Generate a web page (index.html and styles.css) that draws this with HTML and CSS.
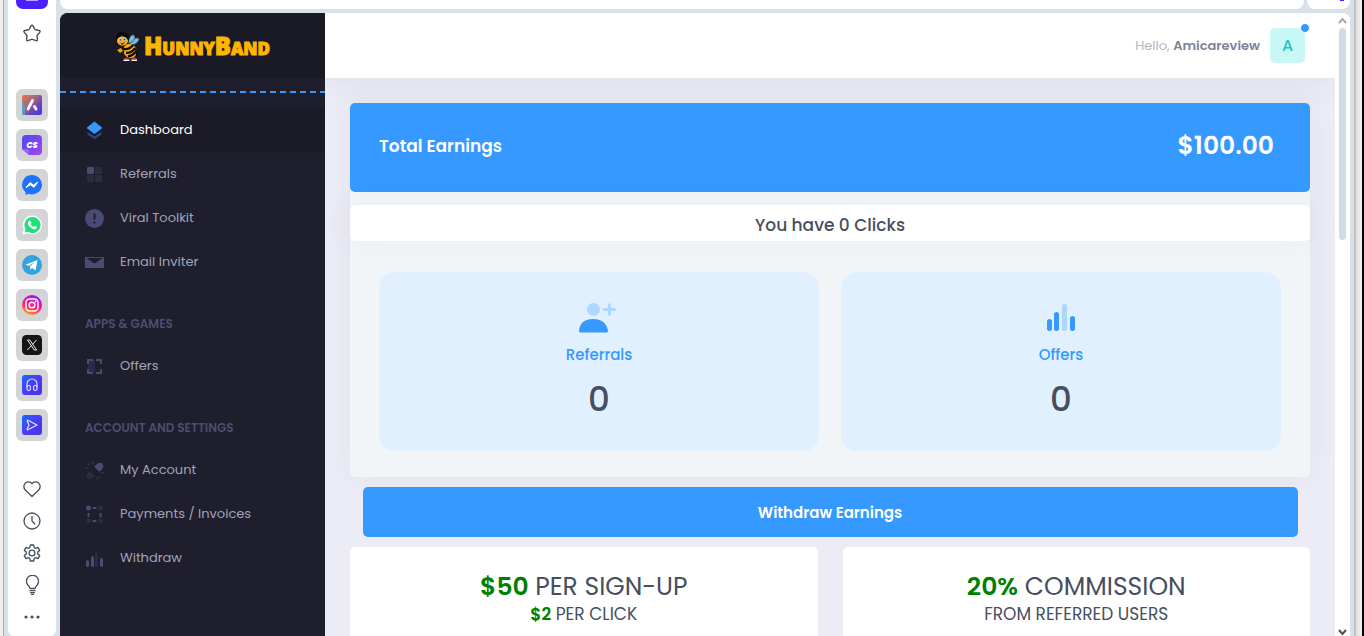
FILE: index.html
```html
<!DOCTYPE html>
<html lang="en">
<head>
  <meta charset="utf-8" />
  <meta name="viewport" content="width=device-width, initial-scale=1" />
  <title>HunnyBand</title>
  <link rel="stylesheet" href="styles.css">
</head>
<body>
<div class="edge-left"></div>
<div class="window">
  <aside class="rail">
    <button class="rail-home" aria-label="Home"><span></span></button>
    <button class="rail-star" aria-label="Bookmarks">
      <svg width="20" height="20" viewBox="0 0 20 20" fill="none" stroke="#46505a" stroke-width="1.4" stroke-linejoin="round"><path d="M9 2.900q1-1.500 2 0l1.800 3.200q.3.500.9.600l3.400.8q1.700.5.600 1.900l-2.400 2.800q-.3.400-.3.900l.4 3.400q0 1.700-1.500 1.200l-3.300-1.300q-.6-.3-1.200 0l-3.300 1.300q-1.500.5-1.500-1.200l.4-3.400q0-.5-.3-.9L2.300 9.400q-1.100-1.400.6-1.900l3.400-.8q.6-.1.9-.6z"/></svg>
    </button>
    <div class="apps">
      <button aria-label="Aria">
        <svg width="20" height="20" viewBox="0 0 20 20">
          <defs><linearGradient id="gAria" x1="0" y1="0" x2="1" y2="1"><stop offset="0" stop-color="#e8774a"/><stop offset=".4" stop-color="#a2687f"/><stop offset=".65" stop-color="#7045b4"/><stop offset="1" stop-color="#3d35f0"/></linearGradient></defs>
          <rect width="20" height="20" rx="2" fill="url(#gAria)"/>
          <path d="M0 6q4 4 3 14H2q-2 0-2-2z" fill="#3fb2df" opacity=".7"/>
          <path d="M10.500 5.500L6 14M12.500 11.500l1.500 2.500" fill="none" stroke="#fff" stroke-width="2.800" stroke-linecap="round"/>
        </svg>
      </button>
      <button aria-label="CS">
        <svg width="20" height="20" viewBox="0 0 20 20">
          <defs><linearGradient id="gCs" x1="0" y1="0" x2="1" y2="1"><stop offset="0" stop-color="#4a4af0"/><stop offset="1" stop-color="#a445f0"/></linearGradient></defs>
          <path d="M4 0h12a4 4 0 0 1 4 4v12a4 4 0 0 1-4 4H7l-7-6V4a4 4 0 0 1 4-4z" fill="url(#gCs)"/>
          <path d="M0 14h5q2 0 2 2v4z" fill="#8d6bf5"/>
          <text x="10" y="13" class="cs-text">CS</text>
        </svg>
      </button>
      <button aria-label="Messenger">
        <svg width="20" height="20" viewBox="0 0 20 20"><path d="M10 0a10 9.700 0 1 1-3.500 18.800L3.500 20v-3A9.700 9.700 0 0 1 10 0z" fill="#1b74fb"/><path d="M4 12.500l4-5 3.500 2.600L16 7l-4 5.300-3.500-2.600z" fill="#fff" stroke="#fff" stroke-linejoin="round"/></svg>
      </button>
      <button aria-label="WhatsApp">
        <svg width="20" height="20" viewBox="0 0 20 20"><path d="M10.500.500a9.500 9.500 0 1 1-4.600 17.800L.5 19.500l1.300-5A9.500 9.500 0 0 1 10.500.5z" fill="#fff"/><path d="M10.500 2a8 8 0 1 1-4.300 14.700L2.700 17.400l.9-3.300A8 8 0 0 1 10.500 2z" fill="#1fe07a"/><path d="M7.300 5.700l1.200.1 1 2.300-.9 1.200q1 1.900 3 2.700l1.200-1.200 2.200 1.100q0 2.300-2.400 2.500-3.500-.3-5.700-3.600-2.400-3.400.4-5.100z" fill="#fff"/></svg>
      </button>
      <button aria-label="Telegram">
        <svg width="20" height="20" viewBox="0 0 20 20"><circle cx="10" cy="10" r="10" fill="#32a3dc"/><path d="M3.500 9.800L15.500 5l-2 10.500-3.300-2.500-1.800 1.700-.4-3.500 5-4.200-6.400 3.700z" fill="#fff"/></svg>
      </button>
      <button aria-label="Instagram">
        <svg width="20" height="20" viewBox="0 0 20 20">
          <defs><linearGradient id="gInsta" x1=".2" y1="1" x2=".6" y2="0"><stop offset="0" stop-color="#ffb800"/><stop offset=".35" stop-color="#ff3860"/><stop offset=".65" stop-color="#f010a0"/><stop offset="1" stop-color="#8a20f5"/></linearGradient></defs>
          <circle cx="10" cy="10" r="10" fill="url(#gInsta)"/>
          <g fill="none" stroke="#fff" stroke-width="1.400"><rect x="4" y="4" width="12" height="12" rx="3.500"/><circle cx="10" cy="10" r="2.800"/></g><circle cx="13.500" cy="6.500" r=".9" fill="#fff"/>
        </svg>
      </button>
      <button aria-label="X">
        <svg width="20" height="20" viewBox="0 0 20 20"><rect width="20" height="20" rx="4.500" fill="#141414"/><path d="M5.500 5h2.300l6.800 10h-2.400zM14.500 5l-4 4.400M9.300 10.800L5.300 15" fill="none" stroke="#fff" stroke-width=".9"/></svg>
      </button>
      <button aria-label="Player">
        <svg width="20" height="20" viewBox="0 0 20 20">
          <defs><linearGradient id="gBlue" x1="0" y1="0" x2="1" y2="1"><stop offset="0" stop-color="#1769ff"/><stop offset=".5" stop-color="#4a3cf6"/><stop offset="1" stop-color="#4a2fe8"/></linearGradient></defs>
          <rect width="20" height="20" rx="3" fill="url(#gBlue)"/>
          <g fill="none" stroke="#e4e6ff" stroke-width="1.100"><path d="M5 12V9a5 5 0 0 1 10 0v3"/><rect x="5" y="10.500" width="3.400" height="5" rx="1.600"/><rect x="11.600" y="10.500" width="3.400" height="5" rx="1.600"/></g>
        </svg>
      </button>
      <button aria-label="Flow">
        <svg width="20" height="20" viewBox="0 0 20 20"><rect width="20" height="20" rx="3" fill="url(#gBlue)"/><path d="M5.800 5.200L15 10l-9.200 4.800q-.8-.2-.6-1L7 10 5.200 6.200q-.2-.8.600-1z" fill="none" stroke="#e4e6ff" stroke-width="1.200" stroke-linejoin="round"/></svg>
      </button>
    </div>
    <div class="tools">
      <button aria-label="Favourites"><svg width="20" height="20" viewBox="0 0 20 20"><path d="M10 17.500L3.300 11a4.700 4.700 0 0 1 0-6.800 4.500 4.500 0 0 1 6.700.5 4.500 4.500 0 0 1 6.700-.5 4.700 4.700 0 0 1 0 6.800z"/></svg></button>
      <button aria-label="History"><svg width="20" height="20" viewBox="0 0 20 20"><circle cx="10" cy="10" r="8"/><path d="M10 5.500V10l2.800 3"/></svg></button>
      <button aria-label="Settings"><svg width="20" height="20" viewBox="0 0 20 20"><circle cx="10" cy="10" r="2.900"/><path d="M8.300 2h3.400l.5 2.600 1.300.7 2.500-.9 1.700 3-2 1.700v1.800l2 1.700-1.700 3-2.500-.9-1.300.7-.5 2.600H8.300l-.5-2.600-1.300-.7-2.500.9-1.700-3 2-1.700V9.100l-2-1.700 1.700-3 2.500.9 1.300-.7z"/></svg></button>
      <button aria-label="Tips"><svg width="20" height="20" viewBox="0 0 20 20"><path d="M8 13.500q0-1.500-2-3.300a6 6 0 1 1 9 0q-2 1.800-2 3.300zM8 15.700h5M8.500 17.700h4M9.500 19.500h2"/></svg></button>
      <button aria-label="More"><svg width="20" height="20" viewBox="0 0 20 20"><g class="dots"><circle cx="4" cy="10" r="1.600"/><circle cx="10" cy="10" r="1.600"/><circle cx="16" cy="10" r="1.600"/></g></svg></button>
    </div>
  </aside>

  <div class="main">
    <div class="toolbar">
      <div class="address"></div>
      <div class="profile"><span></span></div>
    </div>

    <div class="page">
      <nav class="sidebar">
        <a class="brand" href="#">
          <svg width="26" height="32" viewBox="0 0 26 32">
            <path d="M13 13q2-9 6-8 2 4-1 7zM15 13q6-7 9-4-1 5-8 6z" fill="#83bfdc" stroke="#31607a" stroke-width=".6"/>
            <ellipse cx="15" cy="21" rx="6.500" ry="7.500" transform="rotate(-28 15 21)" fill="#f5ae08"/>
            <path d="M9 19q5 1 9-4M11 23q6 0 9-5M13 26.500q5-1 8-5" fill="none" stroke="#0c0b10" stroke-width="2.300"/>
            <path d="M9 18q-2 4-6 1M9 21q-4 3-6 0M20 19q3 4 1 8" fill="none" stroke="#0c0b10" stroke-width="1.600"/>
            <path d="M2 20l4-2 2 3-3 2z" fill="#e8a21a"/>
            <path d="M1 8Q2 1 8 2q6 1 6 7l-1 5H3z" fill="#0b0a0e"/>
            <circle cx="7.500" cy="10" r="5.800" fill="#f3ae17"/>
            <path d="M1 7Q5-1 13 5l1 6-3-3-4-2-4 2-2 4z" fill="#0b0a0e"/>
            <ellipse cx="5.300" cy="9.500" rx="1.700" ry="2" fill="#a9d5e5"/><ellipse cx="9.700" cy="9" rx="1.800" ry="2.100" fill="#a9d5e5"/>
            <circle cx="5.500" cy="9.800" r=".9" fill="#23546d"/><circle cx="9.500" cy="9.400" r=".9" fill="#23546d"/>
            <path d="M5 12.500q3 1.500 5-1-1 4-3 3.500z" fill="#b52a20"/>
            <path d="M8.500 29q3-2.500 6 0v1.500h-6zM16.500 29q3-2.500 5.500 0v1.500h-5.500z" fill="#d83434"/>
            <path d="M8.500 30.300h6M16.500 30.300H22" stroke="#fff" stroke-width="1.200"/>
          </svg>
          <span>HunnyBand</span>
        </a>
        <div class="divider"></div>
        <ul class="menu">
          <li><a class="active" href="#"><svg width="20" height="20" viewBox="0 0 20 20"><path d="M2.500 12l7 4.500 7-4.500v2.500l-7 4.500-7-4.500z" fill="#3699ff" opacity=".4"/><path d="M9.500 1.500l7.200 5.700q.7.600 0 1.200L9.500 14 2.300 8.400q-.7-.6 0-1.200z" fill="#3699ff"/></svg>Dashboard</a></li>
          <li><a href="#"><svg width="20" height="20" viewBox="0 0 20 20"><rect x="2" y="3" width="7" height="7" rx="1"/><g opacity=".3"><rect x="10" y="3" width="7" height="7" rx="1"/><rect x="2" y="11" width="7" height="7" rx="1"/><rect x="10" y="11" width="7" height="7" rx="1"/></g></svg>Referrals</a></li>
          <li><a href="#"><svg width="20" height="20" viewBox="0 0 20 20"><circle cx="9.500" cy="10.500" r="9.500"/><path d="M9.500 5.500v6M9.500 13.500v2" stroke="#1e1e2d" stroke-width="2"/></svg>Viral Toolkit</a></li>
          <li><a href="#"><svg width="20" height="20" viewBox="0 0 20 20"><path d="M0 5h19v11H0z"/><path d="M1.500 6h16l-8 5.500z" fill="#1e1e2d"/></svg>Email Inviter</a></li>
        </ul>
        <h4>APPS &amp; GAMES</h4>
        <ul class="menu">
          <li><a href="#"><svg width="20" height="20" viewBox="0 0 20 20"><rect x="3" y="4" width="7" height="13" opacity=".3"/><path d="M2 3h6v2H4v3H2zM11 3h6v5h-2V5h-4zM2 13h2v3h4v2H2zM15 13h2v5h-6v-2h4z"/></svg>Offers</a></li>
        </ul>
        <h4>ACCOUNT AND SETTINGS</h4>
        <ul class="menu">
          <li><a href="#"><svg width="20" height="20" viewBox="0 0 20 20" fill="none"><g fill="none" stroke="#494b74" stroke-width="3.600"><path d="M10.500 8l3-3q1.500-1 2.500 0t0 2.500l-3 3"/><path d="M6 12.500l-2 2q-1 1.500 0 2.300t2 0l2.500-2.300" opacity=".35"/></g><path d="M7.500 1l.5 3M3 3l1.500 2M0 8h3M19 13l-3-.5M16 18l-2-2M12 20v-3" stroke="#494b74" stroke-width="1.600" opacity=".45"/></svg>My Account</a></li>
          <li><a href="#"><svg width="20" height="20" viewBox="0 0 20 20"><circle cx="3.500" cy="4" r="2.500"/><g opacity=".3"><circle cx="15.500" cy="4" r="2.500"/><circle cx="3.500" cy="17" r="2.500"/><circle cx="15.500" cy="17" r="2.500"/></g><path d="M7.500 3h4v2h-4zM7.500 16h4v2h-4zM2.500 9h2v4h-2zM14.500 9h2v4h-2z"/></svg>Payments / Invoices</a></li>
          <li><a href="#"><svg width="20" height="20" viewBox="0 0 20 20"><rect x="1" y="12" width="3" height="7" rx="1.500"/><rect x="6" y="8" width="3" height="11" rx="1.500"/><rect x="10" y="4" width="3" height="15" rx="1.500" opacity=".3"/><rect x="15" y="10" width="3" height="9" rx="1.500"/></svg>Withdraw</a></li>
        </ul>
      </nav>

      <div class="wrapper">
        <header class="header">
          <p class="hello">Hello, <b>Amicareview</b></p>
          <a class="avatar" href="#">A<i></i></a>
        </header>

        <main class="content">
          <section class="summary">
            <div class="earnings">
              <h3>Total Earnings</h3>
              <strong>$100.00</strong>
            </div>
            <p class="clicks">You have 0 Clicks</p>
            <div class="tiles">
              <div class="tile">
                <svg width="40" height="36" viewBox="0 0 40 36"><g fill="#aed6ff"><circle cx="14.500" cy="9.500" r="6.500"/><path d="M29 4.500q1.500-3 3 0V8h4q3 1.500 0 3h-4v3.500q-1.500 3-3 0V11h-4q-3-1.500 0-3h4z"/></g><path d="M0 31q1-12 14-12t15 12q0 1.500-1.500 1.500h-26Q0 32.500 0 31z" fill="#3699ff"/></svg>
                <a href="#">Referrals</a>
                <span>0</span>
              </div>
              <div class="tile">
                <svg width="36" height="36" viewBox="0 0 36 36"><g fill="#3699ff"><rect x="4" y="19" width="5" height="12" rx="2.500"/><rect x="11" y="12" width="5" height="19" rx="2.500"/><rect x="27" y="16" width="5" height="15" rx="2.500"/></g><rect x="19" y="4" width="5" height="27" rx="2.500" fill="#aed6ff"/></svg>
                <a href="#">Offers</a>
                <span>0</span>
              </div>
            </div>
          </section>

          <button class="withdraw">Withdraw Earnings</button>

          <div class="rates">
            <section class="rate">
              <h2><b>$50</b> PER SIGN-UP</h2>
              <p><b>$2</b> PER CLICK</p>
            </section>
            <section class="rate">
              <h2><b>20%</b> COMMISSION</h2>
              <p>FROM REFERRED USERS</p>
            </section>
          </div>
        </main>
      </div>

      <div class="scrollbar">
        <svg width="9" height="7" viewBox="0 0 9 7" fill="none" stroke="#a9a9a9" stroke-width="2"><path d="M1 6l3.500-4L8 6"/></svg>
        <div class="thumb"></div>
        <svg width="9" height="7" viewBox="0 0 9 7" fill="none" stroke="#505050" stroke-width="2"><path d="M1 1l3.500 4L8 1"/></svg>
      </div>
    </div>
  </div>
</div>
<div class="edge-right"></div>
</body>
</html>
```

FILE: styles.css
```css
*{margin:0;padding:0;box-sizing:border-box;}
body{display:flex;height:100vh;overflow:hidden;background:#000;font-family:Poppins,Inter,"Liberation Sans",sans-serif;font-size:13px;color:#464e5f;}
button{border:0;background:none;font-family:inherit;cursor:pointer;}
a{text-decoration:none;}
ul{list-style:none;}
svg{display:block;flex:none;}

/* browser frame */
.edge-left{width:4px;background:#efeeec;border-right:1px solid #a9abad;}
.edge-right{width:10px;background:linear-gradient(90deg,#b0b2b4,#e4e4e4 3px,#f0f0f0);border-right:2px solid #000;}
.window{flex:1;display:flex;gap:4px;min-width:0;padding:0 4px;background:#d7e1e9;}
.rail{display:flex;flex-direction:column;align-items:center;width:48px;background:#fff;border-radius:0 0 6px 6px;}
.rail-home{width:32px;height:9px;background:#4b1fff;border-radius:0 0 7px 7px;}
.rail-home span{display:block;width:12px;height:1px;margin:0 auto 8px;background:#b9a8ff;}
.rail-star{margin-top:14px;}
.apps{display:flex;flex-direction:column;gap:8px;margin-top:46px;}
.apps button{display:flex;align-items:center;justify-content:center;width:32px;height:32px;background:#d2d4d6;border-radius:6px;}
.cs-text{font-size:8px;font-weight:800;font-style:italic;text-anchor:middle;fill:#fff;}
.tools{margin-top:32px;}
.tools button{display:flex;align-items:center;justify-content:center;width:32px;height:32px;}
.tools svg{fill:none;stroke:#46505a;stroke-width:1.3;stroke-linejoin:round;stroke-linecap:round;}
.tools .dots{fill:#46505a;stroke:none;}

.main{flex:1;display:flex;flex-direction:column;gap:4px;min-width:0;}
.toolbar{display:flex;gap:3px;height:9px;}
.address{flex:1;background:#fff;border-radius:0 0 8px 8px;}
.profile{width:43px;padding-left:33px;background:#fff;border-radius:0 0 8px 8px;}
.profile span{display:block;width:4px;height:1px;background:#4b1fff;}
.page{flex:1;display:flex;min-height:0;overflow:hidden;background:#fff;border-radius:8px 8px 0 0;}

/* sidebar */
.sidebar{position:relative;z-index:1;width:265px;flex:none;background:#1e1e2d;}
.brand{display:flex;align-items:center;justify-content:center;gap:3px;height:65px;background:#1a1a27;color:#ffb400;}
.brand span{font:800 24px "Open Sans",sans-serif;font-variant:small-caps;-webkit-text-stroke:1px #ffb400;}
.divider{height:2px;margin:13px 0 15px;background:repeating-linear-gradient(90deg,#3699ff 0 6px,transparent 6px 10px);}
.menu a{display:flex;align-items:center;gap:15px;height:44px;padding:0 25px;color:#a2a3b7;}
.menu svg{fill:#494b74;}
.menu .active{background:#1b1b28;color:#fff;}
.sidebar h4{height:40px;margin-top:20px;padding:0 25px;font-size:12px;font-weight:600;line-height:40px;color:#4c4e6f;}

/* content */
.wrapper{flex:1;display:flex;flex-direction:column;min-width:0;background:#ebecf5;}
.header{display:flex;align-items:center;justify-content:flex-end;gap:10px;height:65px;flex:none;padding:0 30px;background:#fff;box-shadow:0 10px 30px rgba(82,63,105,.05);}
.hello{color:#b5b5c3;}
.hello b{font-weight:600;color:#7e8299;}
.avatar{position:relative;width:35px;height:35px;border-radius:5px;background:#c9f7f5;color:#1bc5bd;font-size:16px;font-weight:500;line-height:35px;text-align:center;}
.avatar i{position:absolute;top:-5px;right:-5px;width:10px;height:10px;border:1px solid #fff;border-radius:50%;background:#3699ff;}
.content{padding:25px;}
.summary{border-radius:5px;background:#f2f5f8;box-shadow:0 0 30px rgba(82,63,105,.05);}
.earnings{display:flex;align-items:center;justify-content:space-between;height:89px;padding:0 36px 3px 29px;border-radius:5px;background:#3699ff;color:#fff;}
.earnings h3{font-size:17px;font-weight:600;}
.earnings strong{font-size:25px;font-weight:600;}
.clicks{margin-top:13px;height:36px;border-radius:5px;background:#fff;box-shadow:0 0 30px rgba(82,63,105,.05);font-size:17px;font-weight:500;line-height:40px;text-align:center;}
.tiles{display:grid;grid-template-columns:1fr 1fr;gap:22px;padding:31px 29px 26px;}
.tile{display:flex;flex-direction:column;align-items:center;height:179px;padding-top:28px;border-radius:16px;background:#e1f0ff;}
.tile a{margin-top:8px;color:#3699ff;font-size:15px;font-weight:500;line-height:22px;}
.tile span{margin-top:11px;font-size:34px;font-weight:500;line-height:44px;}
.withdraw{display:block;width:calc(100% - 25px);height:50px;margin:10px auto;border-radius:5px;background:#3699ff;color:#fff;font-size:15px;font-weight:600;}
.rates{display:grid;grid-template-columns:1fr 1fr;gap:25px;}
.rate{height:180px;padding-top:24px;border-radius:5px;background:#fff;text-align:center;}
.rate h2{font-size:25px;font-weight:400;line-height:32px;}
.rate p{font-size:17px;line-height:22px;}
.rate b{font-weight:600;color:#008000;}

.scrollbar{display:flex;flex-direction:column;align-items:center;width:15px;padding-top:4px;background:#fff;}
.thumb{width:7px;height:212px;margin:4px 0 auto;border-radius:4px;background:#d0dbe3;}
```
